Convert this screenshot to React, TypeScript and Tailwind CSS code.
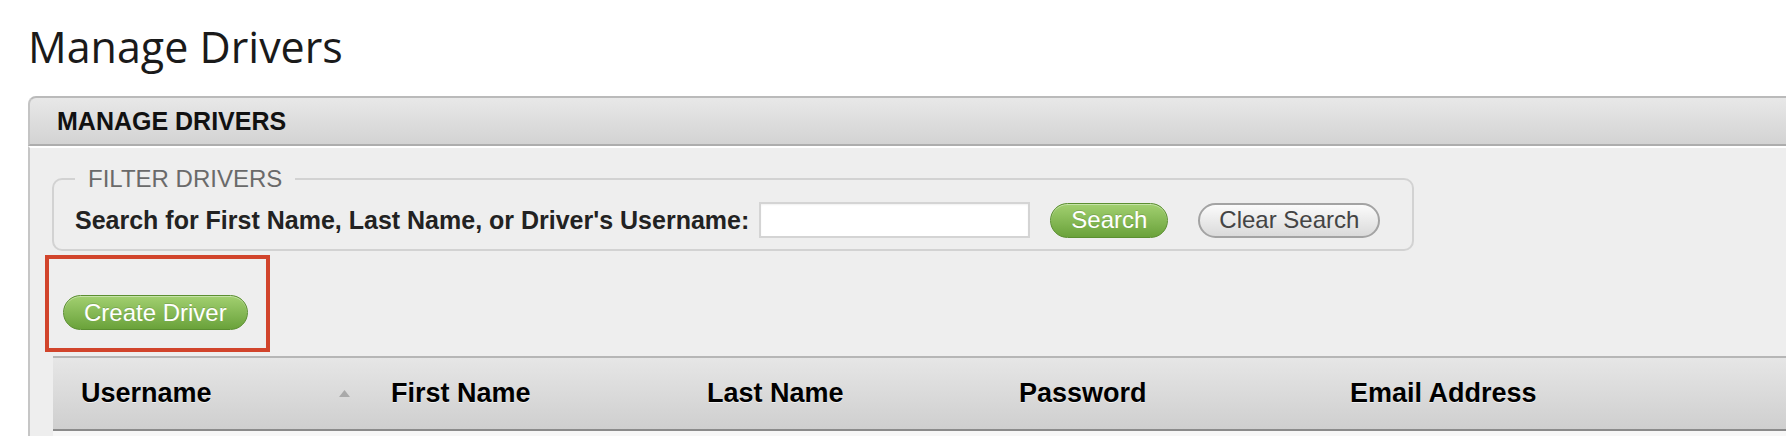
import { useState } from "react";

const columns = [
  { label: "Username", width: "w-[310px]", sortable: true },
  { label: "First Name", width: "w-[316px]" },
  { label: "Last Name", width: "w-[312px]" },
  { label: "Password", width: "w-[331px]" },
  { label: "Email Address", width: "w-[400px]" },
];

function GreenButton({ children }: { children: React.ReactNode }) {
  return (
    <button className="h-[35px] rounded-full border border-[#5b8f31] bg-gradient-to-b from-[#a2d070] to-[#6aa23a] px-[20px] text-[24px] leading-none text-white [text-shadow:0_-1px_0_rgba(0,0,0,0.15)] shadow-[inset_0_1px_0_rgba(255,255,255,0.4)]">
      {children}
    </button>
  );
}

function App() {
  const [query, setQuery] = useState("");

  return (
    <div className="h-[436px] w-full overflow-hidden bg-white font-['Liberation_Sans',Arial,sans-serif]">
      <h1 className="pl-[28px] pt-[18px] font-['Open_Sans',sans-serif] text-[43px] font-normal leading-[57px] text-[#1a1a1a]">
        Manage Drivers
      </h1>

      <div className="ml-[28px] mt-[21px] w-[1800px]">
        {/* panel header */}
        <div className="flex h-[50px] items-center rounded-tl-[8px] border-y-2 border-l-2 border-t-[#bababa] border-b-[#adadad] border-l-[#c4c4c4] bg-gradient-to-b from-[#e8e8e8] to-[#d3d3d3] pl-[27px]">
          <h2 className="text-[25px] font-bold leading-none text-[#111]">
            MANAGE DRIVERS
          </h2>
        </div>

        {/* panel body */}
        <div className="border-l-2 border-t-2 border-l-[#c6c6c6] border-t-white bg-[#eeeeee] pl-[22px] pt-[17px]">
          <fieldset className="w-[1362px] rounded-[10px] border-2 border-[#d2d2d2] pl-[21px] pr-[14px] pb-[11px]">
            <legend className="px-[13px] text-[24px] leading-[28px] text-[#6a6a6a]">
              FILTER DRIVERS
            </legend>
            <div className="mt-[9px] flex h-[36px] items-center">
              <label className="text-[25px] font-bold leading-none text-[#222]">
                Search for First Name, Last Name, or Driver's Username:
              </label>
              <input
                value={query}
                onChange={(e) => setQuery(e.target.value)}
                className="ml-[10px] h-[36px] w-[271px] border-2 border-[#d4d4d4] bg-white shadow-[inset_0_1px_2px_rgba(0,0,0,0.06)] outline-none"
              />
              <div className="ml-[20px]">
                <GreenButton>Search</GreenButton>
              </div>
              <button className="ml-[30px] h-[35px] rounded-full border-2 border-[#a3a3a3] bg-gradient-to-b from-[#fbfbfb] to-[#dadada] px-[19px] text-[24px] leading-none text-[#444]">
                Clear Search
              </button>
            </div>
          </fieldset>

          <div className="relative ml-[11px] mt-[44px] w-fit">
            <GreenButton>Create Driver</GreenButton>
            {/* highlight annotation */}
            <div className="pointer-events-none absolute -bottom-[22px] -left-[18px] -right-[22px] -top-[40px] border-[4px] border-[#d1442b]" />
          </div>

          <div className="ml-[1px] mt-[26px] flex h-[75px] items-center border-y-2 border-t-[#b6b6b6] border-b-[#8b8b8b] bg-gradient-to-b from-[#e6e6e6] to-[#cfcfcf]">
            {columns.map((col) => (
              <div
                key={col.label}
                className={`${col.width} flex shrink-0 items-center justify-between pl-[28px] pr-[13px]`}
              >
                <span className="text-[27px] font-bold leading-none text-black [text-shadow:0_1px_0_rgba(255,255,255,0.6)]">
                  {col.label}
                </span>
                {col.sortable && (
                  <svg width="11" height="7" viewBox="0 0 11 7">
                    <polygon points="5.5,0 11,7 0,7" fill="#a9a9a9" />
                  </svg>
                )}
              </div>
            ))}
          </div>
          <div className="ml-[1px] h-[20px] bg-[#f7f7f7]" />
        </div>
      </div>
    </div>
  );
}

export default App;
